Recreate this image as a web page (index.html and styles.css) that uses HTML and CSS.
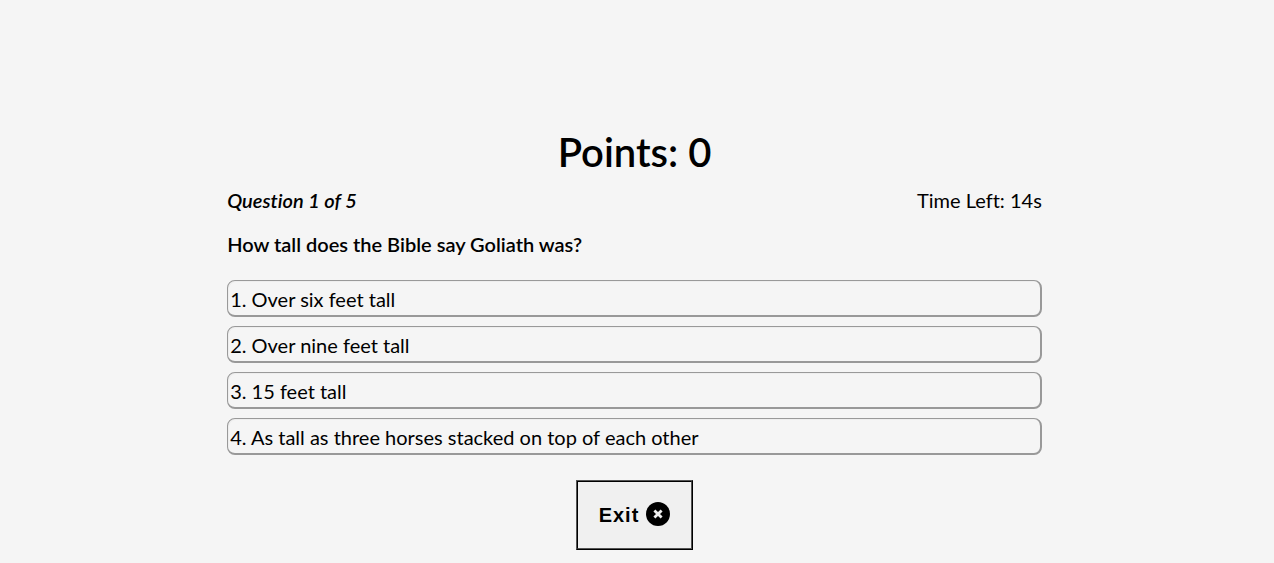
FILE: index.html
```html
<!DOCTYPE html>
<html lang="en">
<head>
<meta charset="utf-8">
<title>Bible Quiz</title>
<link rel="stylesheet" href="styles.css">
</head>
<body>
<main class="quiz">
  <h1 class="points">Points: 0</h1>
  <div class="status">
    <em class="progress">Question 1 of 5</em>
    <span class="timer">Time Left: 14s</span>
  </div>
  <h2 class="question">How tall does the Bible say Goliath was?</h2>
  <div class="answers">
    <button class="answer" type="button">1. Over six feet tall</button>
    <button class="answer" type="button">2. Over nine feet tall</button>
    <button class="answer" type="button">3. 15 feet tall</button>
    <button class="answer" type="button">4. As tall as three horses stacked on top of each other</button>
  </div>
  <button class="exit" type="button">Exit
    <svg class="exit-icon" viewBox="0 0 24 24" aria-hidden="true"><circle cx="12" cy="12" r="12" fill="#000"/><path d="M8.4 8.4l7.2 7.2M15.6 8.4l-7.2 7.2" stroke="#f0f0f0" stroke-width="2.8"/></svg>
  </button>
</main>
</body>
</html>
```
FILE: styles.css
```css
* { box-sizing: border-box; }
body {
  margin: 0;
  padding-right: 5px;
  background: #f5f5f5;
  color: #000;
  font-family: Lato, sans-serif;
  font-size: 20px;
  line-height: 24px;
  font-variant-ligatures: none;
}
.quiz {
  display: flex;
  flex-direction: column;
  width: 64.2%;
  margin: 0 auto;
  padding-top: 128px;
}
.points {
  margin: 0;
  font-size: 40px;
  line-height: 48px;
  font-weight: 600;
  text-align: center;
}
.status {
  display: flex;
  justify-content: space-between;
  margin-top: 12px;
}
.progress { font-weight: 600; }
.question {
  margin: 20px 0 24px;
  font-size: 20px;
  line-height: 24px;
  font-weight: 600;
}
.answers {
  display: grid;
  gap: 9px;
}
.answer {
  height: 37px;
  padding: 2px 2px 0;
  border: 1px solid #999;
  border-right-width: 2px;
  border-bottom-width: 2px;
  border-radius: 8px;
  background: transparent;
  box-shadow: inset 1px 1px #eee;
  color: #000;
  font: inherit;
  text-align: left;
}
.exit {
  display: flex;
  align-items: flex-start;
  align-self: center;
  gap: 7px;
  margin-top: 25px;
  padding: 20px 21px;
  border: 2px solid #000;
  border-style: ridge;
  background: #f0f0f0;
  color: #000;
  font: bold 20px/26px "Liberation Sans", sans-serif;
  letter-spacing: 1px;
}
.exit-icon { width: 24px; height: 24px; }
```
